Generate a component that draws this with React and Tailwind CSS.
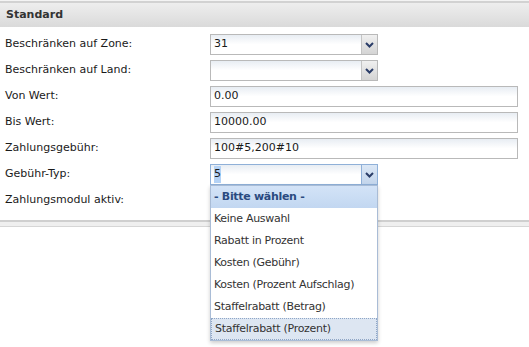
import React from 'react'

const font = { fontFamily: '"DejaVu Sans", Verdana, sans-serif' }

function Chevron() {
  return (
    <svg width="9" height="6" viewBox="0 0 9 6">
      <polyline points="1,1 4.5,4.5 8,1" fill="none" stroke="#2b3d68" strokeWidth="2" />
    </svg>
  )
}

function SelectBox({ value, focused, selected }) {
  return (
    <div className={`flex h-[21px] w-[168px] border ${focused ? 'border-[#8fb0d8]' : 'border-[#b9b9b9]'} bg-gradient-to-b from-[#e8edf3] via-white to-white`}>
      <div className="flex flex-1 items-center px-[3px] text-[11px] text-[#1a1a1a]">
        {selected ? <span className="bg-[#b4d2f5]">{value}</span> : value}
      </div>
      <div className={`flex w-[16px] items-center justify-center border-l ${focused ? 'border-[#8fb0d8] bg-gradient-to-b from-[#dbe7f5] to-[#c3d5ec]' : 'border-[#c4c4c4] bg-gradient-to-b from-[#f0f0f0] to-[#d4d4d4]'}`}>
        <Chevron />
      </div>
    </div>
  )
}

function TextBox({ value }) {
  return (
    <div className="flex h-[21px] w-[308px] items-center border border-[#b9b9b9] bg-gradient-to-b from-[#e8edf3] via-white to-white px-[3px] text-[11px] text-[#1a1a1a]">
      {value}
    </div>
  )
}

const options = [
  'Keine Auswahl',
  'Rabatt in Prozent',
  'Kosten (Gebühr)',
  'Kosten (Prozent Aufschlag)',
  'Staffelrabatt (Betrag)',
  'Staffelrabatt (Prozent)',
]

function Dropdown() {
  return (
    <div className="absolute left-0 top-[21px] z-10 w-[168px] border border-[#a9bcd6] bg-white shadow-[0_2px_4px_rgba(0,0,0,0.2)]">
      <div className="flex h-[22px] items-center bg-gradient-to-b from-[#d3e3f7] to-[#c2d7f1] px-[3px] text-[11px] font-bold tracking-[-0.3px] text-[#2a4a80]">
        - Bitte wählen -
      </div>
      {options.map((o, i) => (
        <div
          key={i}
          className={`flex h-[22px] items-center whitespace-nowrap px-[3px] text-[11px] tracking-[-0.3px] text-[#333] ${i === options.length - 1 ? 'border border-dotted border-[#8fa6c6] bg-[#dde6f2]' : ''}`}
        >
          {o}
        </div>
      ))}
    </div>
  )
}

const rows = [
  { label: 'Beschränken auf Zone:', control: <SelectBox value="31" /> },
  { label: 'Beschränken auf Land:', control: <SelectBox value="" /> },
  { label: 'Von Wert:', control: <TextBox value="0.00" /> },
  { label: 'Bis Wert:', control: <TextBox value="10000.00" /> },
  { label: 'Zahlungsgebühr:', control: <TextBox value="100#5,200#10" /> },
  {
    label: 'Gebühr-Typ:',
    control: (
      <div className="relative">
        <SelectBox value="5" focused selected />
        <Dropdown />
      </div>
    ),
  },
  { label: 'Zahlungsmodul aktiv:', control: <div className="h-[21px]" /> },
]

export default function App() {
  return (
    <div className="relative h-[347px] w-[529px] overflow-hidden bg-white" style={font}>
      <div className="h-[3px] border-t border-[#f4f4f4] bg-[#d2d2d2]" />
      <div className="flex h-[24px] items-center bg-gradient-to-b from-[#eeeeee] to-[#dadada] px-[6px] text-[11px] font-bold text-[#333]">
        Standard
      </div>

      <div className="flex flex-col gap-[5px] pt-[7px]">
        {rows.map((r, i) => (
          <div key={i} className="flex items-center">
            <div className="w-[210px] pl-[5px] text-[11px] text-[#1a1a1a]">{r.label}</div>
            {r.control}
          </div>
        ))}
      </div>

      <div className="mt-[9px] h-[7px] border-t-2 border-b border-t-[#cfcfcf] border-b-[#d6d6d6] bg-[#efefef]" />
    </div>
  )
}
